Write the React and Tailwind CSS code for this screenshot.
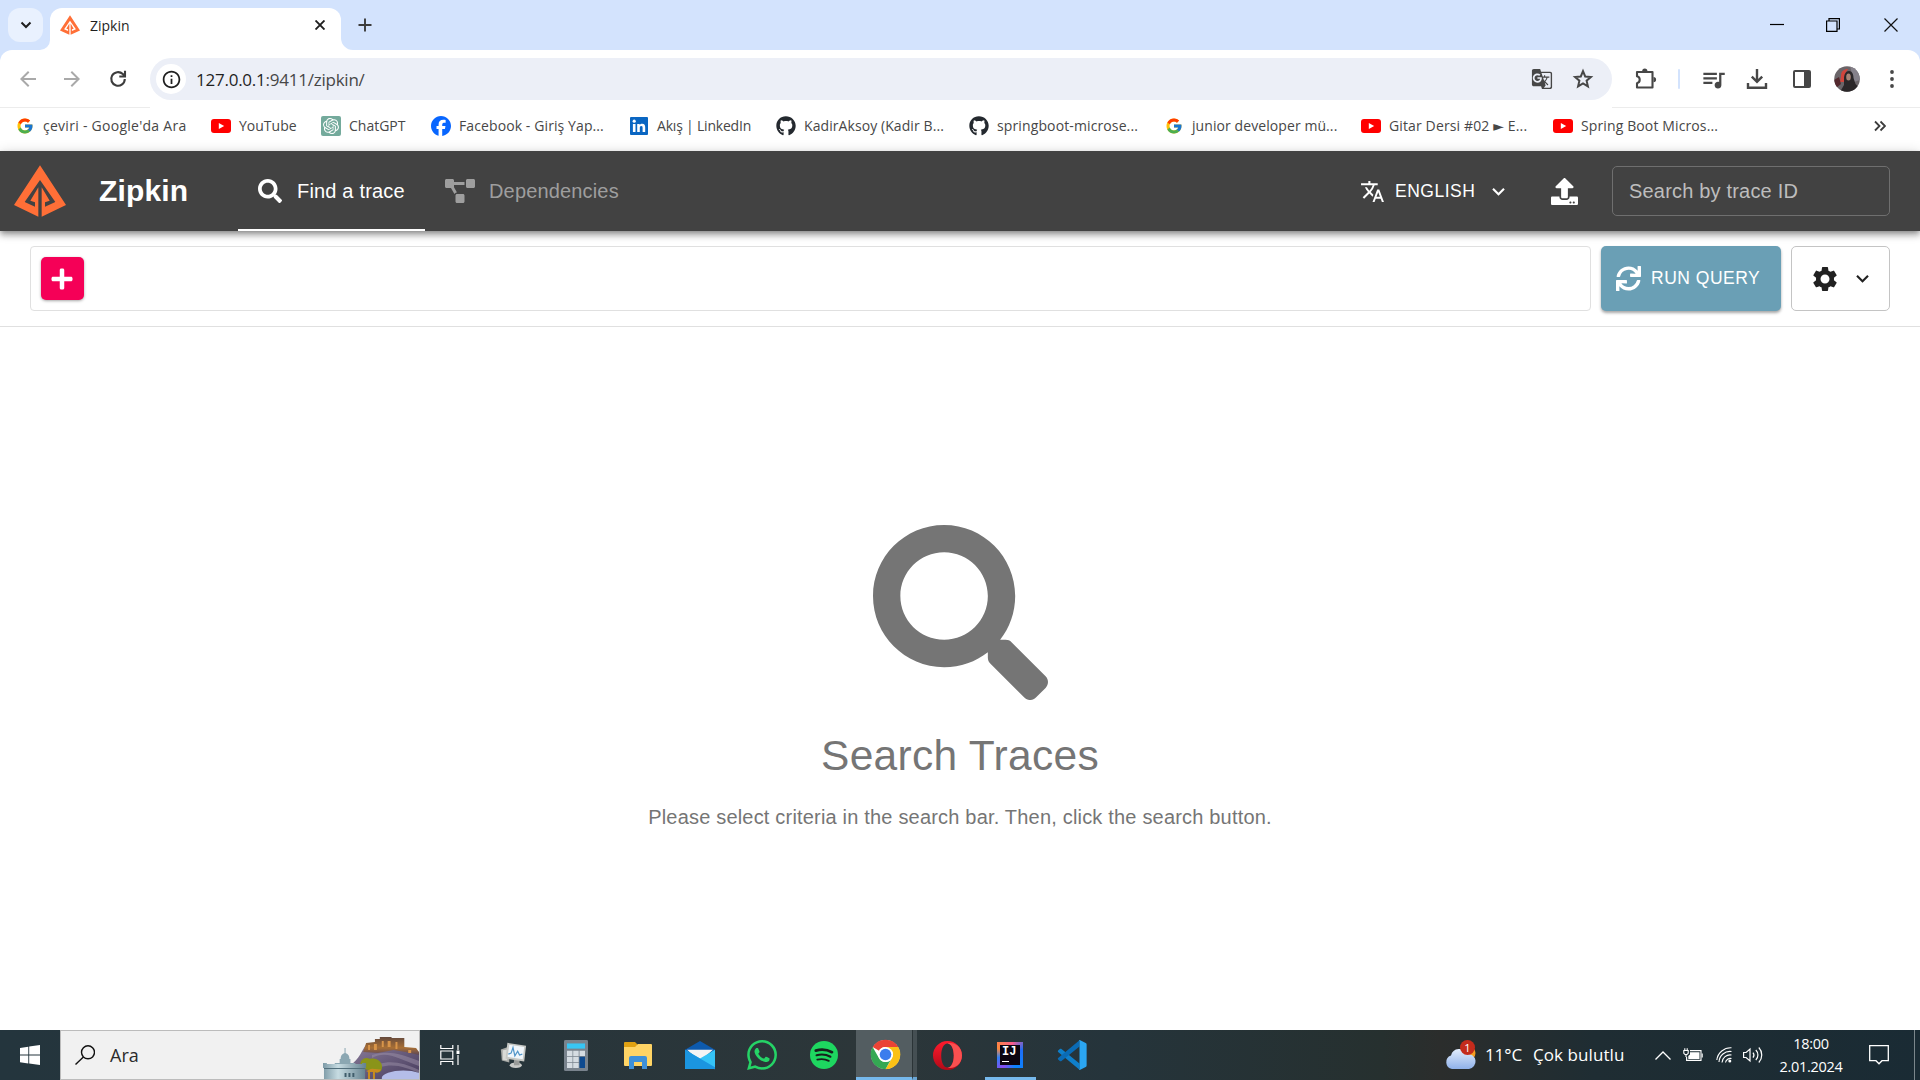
import React from "react";
import { FaSearch, FaProjectDiagram, FaUpload, FaSync, FaPlus, FaGithub } from "react-icons/fa";
import {
  MdTranslate,
  MdSettings,
  MdKeyboardArrowDown,
  MdGTranslate,
  MdQueueMusic,
  MdOutlineInfo,
  MdArrowBack,
  MdArrowForward,
} from "react-icons/md";
import { SiOpenai, SiWhatsapp, SiFacebook } from "react-icons/si";
import { FcGoogle } from "react-icons/fc";

function ZipkinLogo({ className }) {
  return (
    <svg viewBox="42 31 156 156" className={className} fill="#ff6f37" aria-hidden="true">
      <path d="M120 32 42 151l73 35V98L91 138l14 5v13L74 142 120 76z" />
      <path d="M120 32 198 151l-73 35V98l24 40-14 5v13l31-14L120 76z" />
    </svg>
  );
}

function YouTubeIcon() {
  return (
    <svg viewBox="0 0 20 20" className="h-5 w-5">
      <rect x="0" y="3" width="20" height="14" rx="3" fill="#ff0000" />
      <path d="M7.8 6.9v6.2L13.2 10z" fill="#fff" />
    </svg>
  );
}

function ChatIcon() {
  return (
    <span className="flex h-5 w-5 items-center justify-center rounded-[2px] bg-[#74aa9c]">
      <SiOpenai className="h-4 w-4 text-white" />
    </span>
  );
}

function FacebookIcon() {
  return (
    <span className="flex h-5 w-5 rounded-full bg-white">
      <SiFacebook className="h-5 w-5 text-[#0866ff]" />
    </span>
  );
}

function LinkedInIcon() {
  return (
    <svg viewBox="0 0 20 20" className="h-5 w-5">
      <rect x="1" y="1" width="18" height="18" rx="1" fill="#0a66c2" />
      <g fill="#fff">
        <circle cx="5.2" cy="5.2" r="1.6" />
        <path d="M3.9 7.9h2.6V16H3.9zM8.2 7.9h2.5V9c.5-.8 1.4-1.3 2.5-1.3 2.4 0 3 1.5 3 3.7V16h-2.6v-4c0-1.100-.1-2-1.300-2-1.200 0-1.500.9-1.500 2v4H8.200z" />
      </g>
    </svg>
  );
}

const GoogleIcon = () => <FcGoogle className="h-[18px] w-[18px]" />;
const GitHubIcon = () => <FaGithub className="h-5 w-5 text-[#24292f]" />;

const bookmarks = [
  { w: "w-[196px]", Icon: GoogleIcon, label: "çeviri - Google'da Ara", track: "tracking-[0.27px]" },
  { w: "w-[110px]", Icon: YouTubeIcon, label: "YouTube", track: "" },
  { w: "w-[110px]", Icon: ChatIcon, label: "ChatGPT", track: "" },
  { w: "w-[198px]", Icon: FacebookIcon, label: "Facebook - Giriş Yap...", track: "tracking-[0.1px]" },
  { w: "w-[147px]", Icon: LinkedInIcon, label: "Akış | LinkedIn", track: "tracking-[-0.2px]" },
  { w: "w-[193px]", Icon: GitHubIcon, label: "KadirAksoy (Kadir B...", track: "tracking-[0.08px]" },
  { w: "w-[195px]", Icon: GitHubIcon, label: "springboot-microse...", track: "tracking-[0.12px]" },
  { w: "w-[197px]", Icon: GoogleIcon, label: "junior developer mü...", track: "tracking-[0.08px]" },
  { w: "w-[192px]", Icon: YouTubeIcon, label: "Gitar Dersi #02 ► E...", track: "tracking-[0.13px]" },
  { w: "w-[196px]", Icon: YouTubeIcon, label: "Spring Boot Micros...", track: "tracking-[0.12px]" },
];

function TabStrip() {
  return (
    <div className="flex h-[50px] items-end bg-[#d3e3fd]">
      <div className="ml-2 mb-2 flex h-[34px] w-[35px] items-center justify-center rounded-xl bg-[#e9f1fe]">
        <svg viewBox="0 0 12 12" className="h-3 w-3" fill="none" stroke="#1f1f1f" strokeWidth="2">
          <path d="M1.500 3.500 6 8l4.500-4.500" />
        </svg>
      </div>
      <svg viewBox="0 0 10 10" className="ml-[-3px] h-[10px] w-[10px]" fill="#fff">
        <path d="M10 0v10H0A10 10 0 0 0 10 0z" />
      </svg>
      <div className="flex h-[42px] w-[291px] items-center rounded-t-xl bg-white pb-2">
        <ZipkinLogo className="ml-[10px] h-5 w-5" />
        <span className="ml-[10px] w-[178px] text-[14px] text-[#1f1f1f]">Zipkin</span>
        <svg viewBox="0 0 10 10" className="ml-[47px] h-[10px] w-[10px]" stroke="#1f1f1f" strokeWidth="1.900">
          <path d="M.5.5l9 9M9.500.5l-9 9" />
        </svg>
      </div>
      <svg viewBox="0 0 12 12" className="h-3 w-3" fill="#fff">
        <path d="M0 0v12h12A12 12 0 0 1 0 0z" />
      </svg>
      <svg viewBox="0 0 14 14" className="mb-[18px] ml-[5px] h-[14px] w-[14px]" stroke="#3c3c3c" strokeWidth="1.900">
        <path d="M7 .5v13M.5 7h13" />
      </svg>
      <div className="flex-1" />
      <svg viewBox="0 0 14 14" className="mb-[18px] h-[14px] w-[14px]" stroke="#000" strokeWidth="1.200">
        <path d="M0 6.500h14" />
      </svg>
      <svg viewBox="0 0 14 14" className="mb-[18px] ml-[42px] h-[14px] w-[14px]" stroke="#000" strokeWidth="1.200" fill="none">
        <path d="M.6 3h10.400v10.400H.6zM3 3V.6h10.400V11H11" />
      </svg>
      <svg viewBox="0 0 14 14" className="mb-[18px] ml-[44px] mr-[22px] h-[14px] w-[14px]" stroke="#111" strokeWidth="1.200">
        <path d="M.5.5l13 13M13.500.5l-13 13" />
      </svg>
    </div>
  );
}

function Avatar() {
  return (
    <svg viewBox="0 0 26 26" className="ml-[23px] h-[26px] w-[26px]">
      <defs>
        <clipPath id="avatarClip">
          <circle cx="13" cy="13" r="12.800" />
        </clipPath>
      </defs>
      <g clipPath="url(#avatarClip)">
        <rect width="26" height="26" fill="#6b6569" />
        <path d="M16 0h10v14l-6 2z" fill="#85818a" />
        <path d="M7 10C7 5 10 3 14 3l-3 5-1 8H6z" fill="#d2453c" />
        <path d="M10 13c0-5 2-8 5-8s4.500 3 4.500 7l2 6 3 3v5H6l4-7z" fill="#2b2729" />
        <ellipse cx="14.500" cy="11" rx="2.300" ry="3.500" fill="#a88577" />
        <path d="M0 14l5-3 2 7-5 4z" fill="#53282d" />
      </g>
    </svg>
  );
}

function Toolbar() {
  return (
    <div className="bg-[#d3e3fd]">
      <div className="flex h-[58px] items-center rounded-t-[12px] bg-white text-[#474747]">
        <MdArrowBack className="ml-[16px] h-6 w-6 text-[#a9a9a9]" />
        <MdArrowForward className="ml-[20px] h-6 w-6 text-[#a9a9a9]" />
        <svg viewBox="0 0 18 18" className="ml-[25px] h-[18px] w-[18px]" fill="none" stroke="#3c3c3c" strokeWidth="2.100">
          <path d="M15.800 9a6.800 6.800 0 1 1-2-4.900L16 6.300M16 .8v5.700h-5.700" />
        </svg>
        <div className="ml-[23px] flex h-[42px] w-[1462px] items-center rounded-full bg-[#eceff7]">
          <span className="ml-[6px] flex h-[30px] w-[30px] items-center justify-center rounded-full bg-white">
            <MdOutlineInfo className="h-[21px] w-[21px] text-[#1f1f1f]" />
          </span>
          <span className="ml-[10px] flex-1 pt-px text-[17px] tracking-[-0.24px] text-[#474747]">
            <span className="text-[#1f1f1f]">127.0.0.1</span>:9411/zipkin/
          </span>
          <MdGTranslate className="h-[22px] w-[22px]" />
          <svg viewBox="0 0 24 24" className="ml-[18px] mr-[17px] h-6 w-6" fill="none" stroke="currentColor" strokeWidth="2">
            <path d="M12 4.200l2.200 5.300 5.700.5-4.300 3.700 1.300 5.600-4.900-3-4.900 3 1.300-5.600-4.300-3.700 5.700-.5z" />
          </svg>
        </div>
        <svg viewBox="0 0 22 22" className="ml-[23px] h-[22px] w-[22px]">
          <path
            d="M2 4h15.500v15.500H2v-4.300c3.600-.9 3.600-6 0-6.900z"
            fill="none"
            stroke="currentColor"
            strokeWidth="2.100"
            strokeLinejoin="round"
          />
          <path d="M7.200 3a2.600 2.600 0 0 1 5.200 0zM18.500 9a2.600 2.600 0 0 1 0 5.200z" fill="currentColor" />
        </svg>
        <span className="ml-[21px] h-5 w-[2px] rounded bg-[#d3e3fd]" />
        <MdQueueMusic className="ml-[20px] h-[27px] w-[27px]" />
        <svg viewBox="0 0 22 22" className="ml-[19px] h-[22px] w-[22px]" fill="none" stroke="currentColor" strokeWidth="2.400">
          <path d="M11 1v12.500M5.800 8.600l5.200 5.200 5.200-5.200M2 15v4.800h18V15" />
        </svg>
        <svg viewBox="0 0 18 18" className="ml-[25px] h-[18px] w-[18px]">
          <rect x="1" y="1" width="16" height="16" rx="1" fill="none" stroke="#474747" strokeWidth="2" />
          <path d="M11 1h6v16h-6z" fill="#474747" />
        </svg>
        <Avatar />
        <svg viewBox="0 0 4 18" className="ml-[30px] h-[18px] w-1" fill="#474747">
          <circle cx="2" cy="2" r="1.900" />
          <circle cx="2" cy="9" r="1.900" />
          <circle cx="2" cy="16" r="1.900" />
        </svg>
      </div>
    </div>
  );
}

function BookmarksBar() {
  return (
    <div className="bg-white">
      <div className="-mt-px flex h-px justify-between">
        <span className="w-[150px] bg-[#ececec]" />
        <span className="w-[308px] bg-[#ececec]" />
      </div>
      <div className="flex h-[43px] items-center pb-[8px] pl-[15px] text-[14px] text-[#474747]">
        {bookmarks.map(({ w, Icon, label, track }) => (
          <div key={label} className={`${w} flex shrink-0 items-center gap-2 whitespace-nowrap`}>
            <span className="flex w-5 justify-center">
              <Icon />
            </span>
            <span className={`${track} pb-px`}>{label}</span>
          </div>
        ))}
        <svg viewBox="0 0 12 12" className="ml-[125px] h-3 w-3" fill="none" stroke="#3c3c3c" strokeWidth="1.800">
          <path d="M1 1.500 5.500 6 1 10.500M6.500 1.500 11 6l-4.500 4.500" />
        </svg>
      </div>
    </div>
  );
}

function AppHeader() {
  return (
    <header className="relative z-10 flex h-20 items-center bg-[#424242] text-white shadow-[0_2px_5px_-1px_rgba(0,0,0,0.3),0_5px_6px_0_rgba(0,0,0,0.2),0_1px_12px_0_rgba(0,0,0,0.15)]">
      <ZipkinLogo className="ml-[14px] h-[52px] w-[52px]" />
      <h1 className="ml-[33px] w-[139px] text-[30px] font-bold leading-none tracking-[0.15px]">Zipkin</h1>
      <div className="flex h-20 w-[187px] items-center border-b-2 border-white pt-[2px]">
        <FaSearch className="ml-[20px] h-6 w-6" />
        <span className="ml-[15px] whitespace-nowrap text-[20px] tracking-[0.18px]">Find a trace</span>
      </div>
      <div className="flex items-center text-[#9e9e9e]">
        <FaProjectDiagram className="ml-[20px] h-[30px] w-[30px]" />
        <span className="ml-[14px] text-[20px] tracking-[0.16px]">Dependencies</span>
      </div>
      <div className="ml-auto mr-[30px] flex items-center">
        <MdTranslate className="h-[25px] w-[25px]" />
        <span className="ml-[10px] w-[84px] text-[17.5px] tracking-[0.5px]">ENGLISH</span>
        <MdKeyboardArrowDown className="ml-[7px] h-[25px] w-[25px]" />
        <FaUpload className="ml-[40px] h-[27px] w-[27px]" />
        <div className="ml-[34px] flex h-[50px] w-[278px] items-center rounded-[5px] border border-[#6f6f6f] pl-[16px] text-[20px] tracking-[0.19px] text-[#bdbdbd]">
          Search by trace ID
        </div>
      </div>
    </header>
  );
}

function SearchBar() {
  return (
    <div className="flex h-24 items-center gap-[10px] border-b border-[#e0e0e0] px-[30px]">
      <div className="flex h-[65px] flex-1 items-center rounded-[4px] border border-[#e0e0e0] pl-[10px]">
        <button className="flex h-[43px] w-[43px] items-center justify-center rounded-[5px] bg-[#f50057] pr-px text-white shadow-[0_1px_3px_rgba(0,0,0,0.35)]">
          <FaPlus className="h-[24px] w-[24px]" />
        </button>
      </div>
      <button className="flex h-[65px] w-[180px] items-center rounded-[5px] bg-[#6a9fb5] pl-[15px] text-[17.5px] tracking-[0.5px] text-white shadow-[0_2px_3px_rgba(0,0,0,0.35)]">
        <FaSync className="h-[25px] w-[25px]" />
        <span className="ml-[10px] whitespace-nowrap">RUN QUERY</span>
      </button>
      <button className="flex h-[65px] w-[99px] items-center rounded-[5px] border border-[#c4c4c4] pl-[18px] text-[#212121]">
        <MdSettings className="h-[30px] w-[30px]" />
        <MdKeyboardArrowDown className="ml-[10px] h-[25px] w-[25px]" />
      </button>
    </div>
  );
}

function EmptyState() {
  return (
    <main className="flex flex-1 flex-col items-center pt-[198px] text-[#757575]">
      <FaSearch className="h-[175px] w-[175px]" />
      <h2 className="mt-[31px] text-[42.5px] leading-[50px] tracking-[0.3px]">Search Traces</h2>
      <p className="mt-[21px] text-[20px] leading-[30px] tracking-[0.19px]">
        Please select criteria in the search bar. Then, click the search button.
      </p>
    </main>
  );
}

function Scenery() {
  return (
    <svg viewBox="0 0 98 48" className="h-12 w-[96px]" preserveAspectRatio="none">
      <defs>
        <linearGradient id="hill" x1="0" y1="0" x2="1" y2="1">
          <stop offset="0" stopColor="#8b7d9b" />
          <stop offset="1" stopColor="#453a5b" />
        </linearGradient>
        <linearGradient id="fort" x1="0" y1="0" x2="0" y2="1">
          <stop offset="0" stopColor="#65493c" />
          <stop offset="0.6" stopColor="#a86f35" />
          <stop offset="1" stopColor="#5a4658" />
        </linearGradient>
        <linearGradient id="palace" x1="0" y1="0" x2="1" y2="0">
          <stop offset="0" stopColor="#7d9aa6" />
          <stop offset="0.35" stopColor="#c7dce2" />
          <stop offset="1" stopColor="#64818f" />
        </linearGradient>
      </defs>
      <path d="M28 34c8-4 13-17 16-20l30 1 24 6v27H40z" fill="url(#hill)" />
      <path d="M41 21l3-9 9-1V8h5V6h12v1h13v9l12 1 3 4v3l-14-3-12-2-16 3z" fill="url(#fort)" />
      <path d="M46 14h2v5h-2zM52 13h3v6h-3zM60 10h2v6h-2zM66 10h3v6h-3zM74 11h2v7h-2zM87 19h3v3h-3z" fill="#d8954a" />
      <path d="M50 27c15-8 27 1 48 8v-5C80 23 66 19 50 24zM58 36c15-4 26 0 40 6v-3c-15-7-28-10-41-6z" fill="#a297ad" opacity=".45" />
      <ellipse cx="82" cy="47" rx="22" ry="7.500" fill="#b4bde8" />
      <path d="M39 37c-3-7 3-12 9-9 6-2 14 3 12 10-1 4-5 4-7 3v7h-2v-7l-3-1v8h-2v-9z" fill="#8a9419" />
      <path d="M44 40c3 0 4-3 8-2 4 0 5 1 7 0-1 4-4 4-6 3v7h-2v-7h-3v7h-2v-7z" fill="#c98c20" />
      <path d="M22 17h1v5c3 1 4 3 4 6h1v4h5v2H12v-2h5v-4h1c0-3 1-5 4-6z" fill="#8ba7b2" />
      <path d="M0 32h4v1h36v-1h4v5h-1v12H1V37H0z" fill="url(#palace)" />
      <path d="M1 37h42v1H1z" fill="#526f7c" />
      <path d="M22 42h2v4h-2zM26 42h2v4h-2zM30 42h2v4h-2z" fill="#405d6b" />
    </svg>
  );
}

function MonitorIcon() {
  return (
    <svg viewBox="0 0 30 32" className="mr-[2px] h-8 w-[28px]">
      <path d="M2 10l9-3v17l-8-2z" fill="#a7a9a6" />
      <path d="M4 11l5-1v12l-5-1z" fill="#d9dad6" />
      <ellipse cx="18" cy="27" rx="6.500" ry="3" fill="#c9cac8" />
      <path d="M16 21h6v6h-6z" fill="#999b99" />
      <path d="M9 3l20 3-2 17L7 20z" fill="#c6c8c4" />
      <path d="M11 5l16 2.500-1.600 13L9.200 18z" fill="#f0f6fb" />
      <path d="M10 15l3-1 2-6 2 9 3-5 2 4 3-1" fill="none" stroke="#5095c9" strokeWidth="1.300" />
    </svg>
  );
}

function CalculatorIcon() {
  return (
    <svg viewBox="0 0 24 36" className="mr-px h-[31px] w-6" preserveAspectRatio="none">
      <rect x="0" y="0" width="24" height="36" rx="1.500" fill="#79838d" />
      <rect x="3" y="4" width="18" height="6" fill="#38c6f4" />
      <path
        d="M3 12.500h5.500v6H3zM9.200 12.500h5.500v6H9.200zM15.500 12.500H21v6h-5.500zM3 19.500h5.500v6H3zM9.200 19.500h5.500v6H9.200zM3 26.500h5.500v6H3zM9.200 26.500h5.500v6H9.200z"
        fill="#d5dce2"
      />
      <path d="M15.500 19.500H21v13h-5.500z" fill="#0e4a8f" />
    </svg>
  );
}

function FolderIcon() {
  return (
    <svg viewBox="0 0 28 28" className="h-7 w-7">
      <path d="M0 2a1 1 0 0 1 1-1h10l3 3-2 3H0z" fill="#e0a112" />
      <path d="M0 6h11l3-3h13a1 1 0 0 1 1 1v20a1 1 0 0 1-1 1H1a1 1 0 0 1-1-1z" fill="#ffd465" />
      <path d="M5 28V17a2 2 0 0 1 2-2h14a2 2 0 0 1 2 2v11h-5v-7h-8v7z" fill="#3e90d8" />
    </svg>
  );
}

function MailIcon() {
  return (
    <svg viewBox="0 0 30 34" className="h-[30px] w-[30px]" preserveAspectRatio="none">
      <path d="M0 11 15 1l15 10v3H0z" fill="#0d5aad" />
      <path d="M2 11h26L15 24z" fill="#f4f4f4" />
      <path d="M0 11l15 10L30 11v21a1 1 0 0 1-1 1H1a1 1 0 0 1-1-1z" fill="#35c3f6" />
      <path d="M0 11l30 20a1 1 0 0 1-1 2H1a1 1 0 0 1-1-1z" fill="#1b95e0" />
    </svg>
  );
}

function SpotifyIcon() {
  return (
    <svg viewBox="0 0 28 28" className="h-7 w-7">
      <circle cx="14" cy="14" r="14" fill="#1ed760" />
      <g fill="none" stroke="#17201c" strokeLinecap="round">
        <path d="M5.800 9.600c5.500-1.500 11.300-1 16.200 1.600" strokeWidth="2.700" />
        <path d="M6.600 14.200c5-1.300 9.600-.8 13.800 1.500" strokeWidth="2.200" />
        <path d="M7.300 18.600c4.200-1 8-.6 11.500 1.300" strokeWidth="1.800" />
      </g>
    </svg>
  );
}

function ChromeIcon() {
  return (
    <svg viewBox="0 0 48 48" className="h-[31px] w-[31px]">
      <circle cx="24" cy="24" r="22.500" fill="#fff" />
      <path d="M24 1a23 23 0 0 1 19.900 11.500H24A11.500 11.500 0 0 0 14 18.300L4.100 12.500A23 23 0 0 1 24 1z" fill="#ea4335" />
      <path d="M43.900 12.500A23 23 0 0 1 24 47l10-17.300a11.500 11.500 0 0 0 0-11.400L24 12.500z" fill="#fbc116" />
      <path d="M4.100 12.500 14 29.700a11.500 11.500 0 0 0 10 5.800c3.500 0 5.500-.8 8-3L24 47A23 23 0 0 1 4.100 12.500z" fill="#34a853" />
      <circle cx="24" cy="24" r="11.500" fill="#fff" />
      <circle cx="24" cy="24" r="9" fill="#3b7ded" />
    </svg>
  );
}

function OperaIcon() {
  return (
    <svg viewBox="0 0 30 30" className="mr-[2px] h-[29px] w-[29px]">
      <defs>
        <linearGradient id="operaRing" x1="0" y1="0" x2="0" y2="1">
          <stop offset="0" stopColor="#ff1b2d" />
          <stop offset="1" stopColor="#b00a18" />
        </linearGradient>
      </defs>
      <path
        fillRule="evenodd"
        d="M15 0a15 15 0 1 0 0 30 15 15 0 0 0 0-30zm0 2.500c4 0 6.500 5.500 6.500 12.500S19 27.500 15 27.500 8.500 22 8.500 15 11 2.500 15 2.500z"
        fill="url(#operaRing)"
      />
      <path d="M15 2.500c5-2 15 2 15 12.500S20 29.500 15 27.500c4 0 6.500-5.500 6.500-12.500S19 2.500 15 2.500z" fill="#fa5050" />
    </svg>
  );
}

function IdeaIcon() {
  return (
    <div className="flex h-[26px] w-[26px] items-center justify-center bg-[conic-gradient(from_300deg,#fe8a3c,#fc5a8d_20%,#1f6df5_35%,#0a84ff_60%,#8a4bf0_75%,#2f80f7_88%,#fe8a3c)]">
      <div className="flex h-[20px] w-[20px] flex-col bg-[#0c0511] pl-[2px] pt-px text-white">
        <span className="font-['Liberation_Mono'] text-[12px] font-bold leading-[12px]">IJ</span>
        <span className="mt-[3px] h-px w-[7px] bg-white" />
      </div>
    </div>
  );
}

function CodeIcon() {
  return (
    <svg viewBox="0 0 32 32" className="mr-px h-[30px] w-[30px]">
      <path d="M1.200 11.200 3 9.600c.5-.5 1.200-.5 1.800 0L24 25v6.800L1.200 12.800c-.5-.5-.5-1.100 0-1.600z" fill="#0f7fca" />
      <path d="M1.200 20.800 3 22.400c.5.5 1.200.5 1.800 0L24 7V.2L1.200 19.200c-.5.5-.5 1.100 0 1.600z" fill="#0a6bb5" />
      <path d="M23 .5c.5-.5 1.200-.5 1.800-.2l5.800 2.800c.6.300 1 .9 1 1.600v22.600c0 .7-.4 1.300-1 1.600l-5.800 2.800c-.6.300-1.300.3-1.800-.2.600.5 1 .1 1-.700V1.200c0-.800-.4-1.200-1-.7z" fill="#2ba6f2" />
    </svg>
  );
}

const apps = [
  { name: "monitor", Icon: MonitorIcon },
  { name: "calculator", Icon: CalculatorIcon },
  { name: "folder", Icon: FolderIcon },
  { name: "mail", Icon: MailIcon },
  { name: "whatsapp", Icon: () => <SiWhatsapp className="h-[30px] w-[30px] text-[#25d366]" /> },
  { name: "spotify", Icon: SpotifyIcon },
  { name: "chrome", Icon: ChromeIcon, state: "active" },
  { name: "opera", Icon: OperaIcon },
  { name: "idea", Icon: IdeaIcon, state: "open" },
  { name: "code", Icon: CodeIcon },
];

function TaskbarApp({ Icon, state }) {
  if (state === "active") {
    return (
      <div className="flex h-full w-[62px] pl-px">
        <div className="flex h-full w-[56px] flex-col items-center justify-end border-b-[3px] border-[#76b9ed] bg-[#535d61] pb-[7px] pl-[3px]">
          <Icon />
        </div>
        <div className="h-full w-[5px] border-b-[3px] border-l border-b-[#6aa5d3] border-l-[#2b3437] bg-[#454f53]" />
      </div>
    );
  }
  return (
    <div className="flex h-full w-[62px] flex-col items-center justify-center">
      <div className="flex flex-1 items-center pt-[3px]">
        <Icon />
      </div>
      {state === "open" ? <div className="h-[3px] w-[51px] bg-[#76b9ed]" /> : <div className="h-[3px]" />}
    </div>
  );
}

function WeatherIcon() {
  return (
    <svg viewBox="0 0 32 32" className="h-8 w-8">
      <defs>
        <linearGradient id="cloud" x1="0" y1="0" x2="0" y2="1">
          <stop offset="0" stopColor="#e3edfc" />
          <stop offset="1" stopColor="#8fb1ea" />
        </linearGradient>
      </defs>
      <circle cx="23" cy="14" r="7.500" fill="#f59d20" />
      <path d="M7 30a7 7 0 0 1-1-13.500A8.500 8.500 0 0 1 22 15a7.500 7.500 0 0 1 2 15z" fill="url(#cloud)" />
      <circle cx="22.500" cy="8.500" r="7.500" fill="#c42b1c" />
      <text x="22.500" y="12.500" textAnchor="middle" fontSize="11" fill="#fff" fontFamily="Open Sans">
        1
      </text>
    </svg>
  );
}

function Taskbar() {
  return (
    <footer className="flex h-[50px] items-center bg-[linear-gradient(90deg,#24353d_0%,#27353b_25%,#2c3639_45%,#25343b_58%,#26302f_72%,#2b2d2c_75%,#1f2d33_83%,#1a2b34_100%)] text-white">
      <svg viewBox="0 0 20 20" className="ml-5 h-5 w-5" fill="#fff">
        <path d="M0 2.900 8.300 1.700V9.600H0zM9.200 1.600 20 0v9.600H9.200zM0 10.500h8.300v7.900L0 17.200zM9.200 10.500H20V20L9.200 18.500z" />
      </svg>
      <div className="ml-5 flex h-[50px] w-[360px] items-center border border-[#bcbcbc] bg-[#f1f1f1] pl-[14px]">
        <svg viewBox="0 0 20 20" className="h-5 w-5" fill="none" stroke="#111" strokeWidth="1.400">
          <circle cx="13" cy="7.300" r="6.500" />
          <path d="M8.400 12 0.500 19.500" />
        </svg>
        <span className="ml-[15px] flex-1 text-[18px] text-[#2b2b2b]">Ara</span>
        <Scenery />
      </div>
      <svg viewBox="0 0 20 20" className="ml-5 h-5 w-5" fill="none" stroke="#fff" strokeWidth="1.200">
        <path d="M.8 0v3.500h12V0M.8 20v-3.500h12V20M.8 6h12v8H.8zM18 0v5M18 10v10" />
        <path d="M16.500 5.500h3v3.500h-3z" fill="#fff" stroke="none" />
      </svg>
      <div className="ml-[23px] flex h-full">
        {apps.map((app) => (
          <TaskbarApp key={app.name} {...app} />
        ))}
      </div>
      <div className="ml-auto flex h-full items-center">
        <WeatherIcon />
        <span className="ml-[8px] w-[48px] whitespace-nowrap text-[17px] tracking-[-0.1px]">11°C</span>
        <span className="w-[122px] whitespace-nowrap text-[17px] tracking-[0.08px]">Çok bulutlu</span>
        <svg viewBox="0 0 16 9" className="h-[9px] w-4" fill="none" stroke="#fff" strokeWidth="1.300">
          <path d="M.5 8.500 8 1l7.500 7.500" />
        </svg>
        <svg viewBox="0 0 20 15" className="ml-[12px] h-[15px] w-5" fill="none" stroke="#fff" strokeWidth="1.100">
          <path d="M7 2.600h11v9.800H3.600V9" />
          <path d="M7 4.200h9.500v6.700H5.300V8L7 6.500z" fill="#fff" stroke="none" />
          <path d="M19.200 5.500v4M.8 2.500h4.400v2.800L4 6.500H2L.8 5.300zM1.800 2.500V.3M4.200 2.500V.3M3 6.500V9" />
        </svg>
        <svg viewBox="0 0 16 16" className="ml-[13px] h-4 w-4" fill="none" stroke="#fff" strokeWidth="1.100">
          <path d="M3 15A11 11 0 0 1 15.500 4.500M.8 13A14 14 0 0 1 15.500.8M6 15.500a8 8 0 0 1 9.500-7.500M9.500 15.500a5 5 0 0 1 6-4" />
          <circle cx="13.800" cy="14" r="1.500" fill="#fff" stroke="none" />
        </svg>
        <svg viewBox="0 0 20 18" className="ml-[11px] h-[18px] w-5" fill="none" stroke="#fff" strokeWidth="1.200">
          <path d="M.6 6.500h2.500L7 3v12l-3.900-3.500H.6zM10 6.500a4 4 0 0 1 0 5M12.800 4a7 7 0 0 1 0 10M15.800 1.500a11 11 0 0 1 0 15" />
        </svg>
        <div className="ml-[14px] flex w-[68px] flex-col items-center pb-px text-[14.5px] leading-[23px] tracking-[-0.3px]">
          <span>18:00</span>
          <span>2.01.2024</span>
        </div>
        <svg viewBox="0 0 20 20" className="ml-[24px] h-5 w-5" fill="none" stroke="#fff" strokeWidth="1.300">
          <path d="M.7.7h18.600v15H13L10 18.800 7 15.700H.7z" />
        </svg>
        <div className="ml-[25px] h-full w-[6px] border-l border-[#7b868b]" />
      </div>
    </footer>
  );
}

export default function App() {
  return (
    <div className="flex h-[1080px] w-[1920px] flex-col overflow-hidden bg-white font-['Open_Sans','DejaVu_Sans',sans-serif]">
      <TabStrip />
      <Toolbar />
      <BookmarksBar />
      <div className="flex flex-1 flex-col font-['Liberation_Sans',Arial,sans-serif]">
        <AppHeader />
        <SearchBar />
        <EmptyState />
      </div>
      <Taskbar />
    </div>
  );
}
